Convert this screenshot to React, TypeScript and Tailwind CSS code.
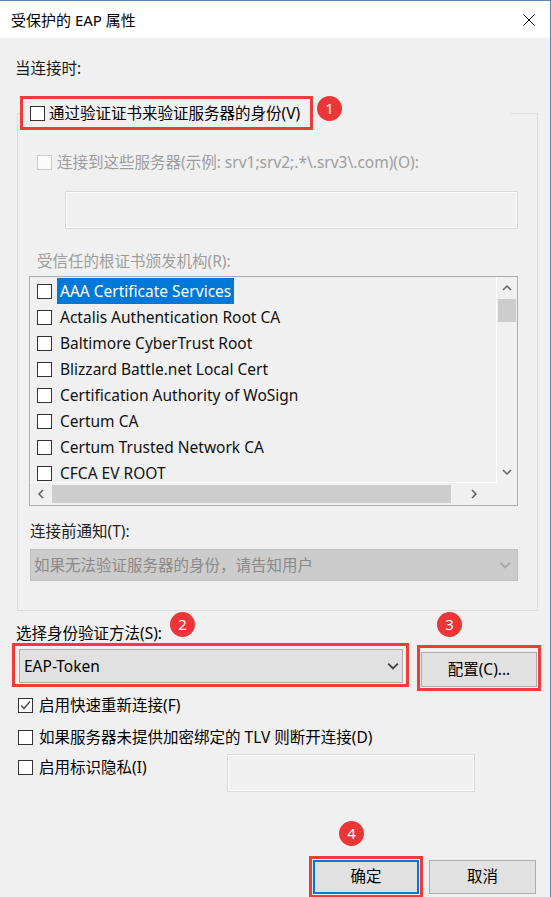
import React from "react";

const certs = [
  "AAA Certificate Services",
  "Actalis Authentication Root CA",
  "Baltimore CyberTrust Root",
  "Blizzard Battle.net Local Cert",
  "Certification Authority of WoSign",
  "Certum CA",
  "Certum Trusted Network CA",
  "CFCA EV ROOT",
];

function Badge({ n, className }: { n: number; className: string }) {
  return (
    <span
      className={`absolute flex h-[25px] w-[25px] items-center justify-center rounded-full bg-[#ea3636] text-[15px] leading-none text-white ${className}`}
    >
      {n}
    </span>
  );
}

function Check({ on = false, off = false }: { on?: boolean; off?: boolean }) {
  return (
    <span
      className={`flex h-[15px] w-[15px] shrink-0 items-center justify-center border ${
        off ? "border-[#cccccc] bg-[#fbfbfb]" : "border-[#333333] bg-white"
      }`}
    >
      {on && (
        <svg viewBox="0 0 13 13" className="h-[13px] w-[13px]">
          <polyline points="2,6.5 5,9.5 11,2.5" fill="none" stroke="#404040" strokeWidth="1.3" />
        </svg>
      )}
    </span>
  );
}

function Chevron({ dir, color = "#606060", className = "" }: { dir: "up" | "down" | "left" | "right"; color?: string; className?: string }) {
  const pts = {
    up: "1,7 5,3 9,7",
    down: "1,3 5,7 9,3",
    left: "7,1 3,5 7,9",
    right: "3,1 7,5 3,9",
  }[dir];
  return (
    <svg viewBox="0 0 10 10" className={`h-[10px] w-[10px] ${className}`}>
      <polyline points={pts} fill="none" stroke={color} strokeWidth="1.5" />
    </svg>
  );
}

export default function App() {
  return (
    <div className="relative flex h-[897px] w-[551px] flex-col overflow-hidden border-t border-r border-[#5b85b3] bg-[#f0f0f0] font-['Noto_Sans','Noto_Sans_CJK_SC',sans-serif] text-[15.5px] text-black">
      {/* title bar */}
      <div className="flex h-[37px] shrink-0 items-center justify-between bg-white pl-[11px] pr-[15px] text-[15px]">
        <span className="leading-[20px]">受保护的 EAP 属性</span>
        <svg viewBox="0 0 12 12" className="h-[12px] w-[12px]">
          <path d="M0.5 0.5 L11.5 11.5 M11.5 0.5 L0.5 11.5" stroke="#000" strokeWidth="1" />
        </svg>
      </div>

      <div className="mt-[20px] h-[20px] pl-[15px] leading-[20px] text-[#1a1a1a]">当连接时:</div>

      <fieldset className="mt-[18px] ml-[17px] w-[521px] border border-[#dcdcdc] px-0 pb-[29px]">
        <legend className="ml-[2px] p-0">
          <div className="relative flex w-[491px] items-center bg-[#f0f0f0]">
            <div className="flex h-[34px] w-[293px] items-center gap-[4px] border-[3px] border-[#ef3b3b] pl-[7px]">
              <Check />
              <span className="leading-[20px]">通过验证证书来验证服务器的身份(V)</span>
            </div>
            <Badge n={1} className="left-[297px] top-[0px]" />
          </div>
        </legend>

        <div className="mt-[22px] flex h-[20px] items-center gap-[5px] pl-[19px] text-[#9d9d9d]">
          <Check off />
          <span className="leading-[20px]">连接到这些服务器(示例: srv1;srv2;.*\.srv3\.com)(O):</span>
        </div>

        <div className="mt-[19px] ml-[47px] h-[38px] w-[453px] border border-[#d9d9d9] shadow-[inset_0_0_0_1px_#fbfbfb]" />

        <div className="mt-[22px] h-[20px] pl-[19px] leading-[20px] text-[#9d9d9d]">受信任的根证书颁发机构(R):</div>

        <div className="mt-[5px] ml-[11px] grid h-[230px] w-[489px] grid-cols-[1fr_20px] grid-rows-[1fr_22px] border border-[#abadb3]">
          <div className="overflow-hidden border-r border-b border-white pt-[1px]">
            {certs.map((c, i) => (
              <div key={c} className="flex h-[26px] items-center pl-[7px]">
                <Check />
                <span
                  className={`ml-[5px] flex h-full items-center px-[3px] leading-[20px] ${
                    i === 0 ? "bg-[#0078d7] text-white" : "text-[#111111]"
                  }`}
                >
                  {c}
                </span>
              </div>
            ))}
          </div>
          <div className="flex flex-col items-center">
            <div className="flex h-[22px] items-center">
              <Chevron dir="up" />
            </div>
            <div className="h-[23px] w-[18px] bg-[#cdcdcd]" />
            <div className="flex-1" />
            <div className="flex h-[22px] items-center">
              <Chevron dir="down" />
            </div>
          </div>
          <div className="flex items-center">
            <div className="flex w-[22px] justify-center">
              <Chevron dir="left" />
            </div>
            <div className="h-[18px] w-[399px] bg-[#cdcdcd]" />
            <div className="flex flex-1 justify-center">
              <Chevron dir="right" />
            </div>
          </div>
          <div />
        </div>

        <div className="mt-[15px] h-[20px] pl-[12px] leading-[20px] text-[#222222]">连接前通知(T):</div>

        <div className="mt-[8px] ml-[12px] flex h-[32px] w-[488px] items-center justify-between border border-[#bfbfbf] bg-[#cccccc] pl-[3px] pr-[6px] text-[#8a8a8a]">
          <span className="leading-[20px]">如果无法验证服务器的身份，请告知用户</span>
          <Chevron dir="down" color="#a8a8a8" className="h-[12px] w-[12px]" />
        </div>
      </fieldset>

      <div className="relative mt-[12px] h-[20px] pl-[16px] leading-[20px]">
        选择身份验证方法(S):
        <Badge n={2} className="left-[170px] top-[-11px]" />
        <Badge n={3} className="left-[437px] top-[-11px]" />
      </div>

      <div className="ml-[12px] flex h-[48px] items-start gap-[8px]">
        <div className="h-[44px] w-[397px] border-[3px] border-[#ef3b3b] pt-[3px] pl-[4px]">
          <div className="flex h-[34px] w-[384px] items-center justify-between border border-[#adadad] bg-[#e1e1e1] pl-[4px] pr-[3px]">
            <span className="leading-[20px]">EAP-Token</span>
            <Chevron dir="down" color="#404040" className="h-[12px] w-[12px]" />
          </div>
        </div>
        <div className="mt-[2px] h-[46px] w-[124px] border-[3px] border-[#ef3b3b] pt-[4px] pl-[1px]">
          <div className="flex h-[35px] w-[116px] items-center justify-center border border-[#adadad] bg-[#e1e1e1]">
            配置(C)...
          </div>
        </div>
      </div>

      <div className="mt-[4px] flex h-[20px] items-center gap-[6px] pl-[18px]">
        <Check on />
        <span className="leading-[20px]">启用快速重新连接(F)</span>
      </div>
      <div className="mt-[12px] flex h-[20px] items-center gap-[6px] pl-[18px]">
        <Check />
        <span className="leading-[20px]">如果服务器未提供加密绑定的 TLV 则断开连接(D)</span>
      </div>
      <div className="mt-[7px] flex items-start pl-[18px]">
        <div className="flex h-[26px] w-[209px] items-center gap-[6px]">
          <Check />
          <span className="leading-[20px]">启用标识隐私(I)</span>
        </div>
        <div className="h-[38px] w-[248px] border border-[#d9d9d9] shadow-[inset_0_0_0_1px_#fbfbfb]" />
      </div>

      <div className="relative mt-[64px] flex items-start pl-[309px]">
        <Badge n={4} className="left-[339px] top-[-35px]" />
        <div className="h-[42px] w-[114px] shrink-0 border-[3px] border-[#ef3b3b] pt-[1px] pl-[1px]">
          <div className="flex h-[34px] w-[106px] items-center justify-center border-2 border-[#0078d7] bg-[#e1e1e1]">
            确定
          </div>
        </div>
        <div className="mt-[4px] ml-[6px] flex h-[34px] w-[107px] shrink-0 items-center justify-center border border-[#adadad] bg-[#e1e1e1]">
          取消
        </div>
      </div>
    </div>
  );
}
